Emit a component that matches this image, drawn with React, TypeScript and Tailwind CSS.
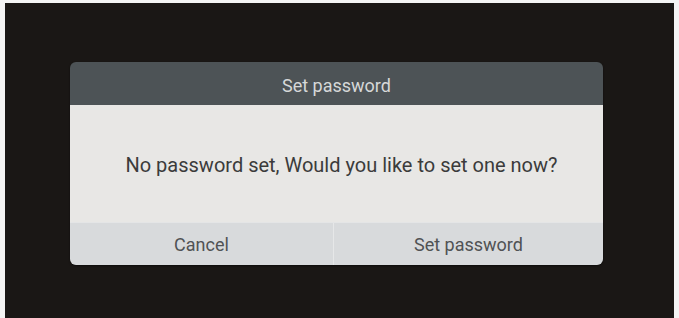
export default function App() {
  return (
    <div className="w-[679px] h-[318px] flex bg-[#f4f4f4] pl-[5px] pt-[3px] pr-[5px] font-['Roboto',sans-serif]">
      <div className="flex-1 bg-[#1a1715] pt-[59px] pl-[65px]">
        <div className="w-[533px] rounded-[6px] overflow-hidden flex flex-col shadow-[0_1px_2px_rgba(0,0,0,0.5)]">
          <div className="h-[43px] bg-[#4d5356] flex items-center justify-center pt-[4px] text-[18px] text-[#d6d8d8]">
            Set password
          </div>
          <div className="h-[117px] bg-[#e8e7e5] flex items-center justify-center pl-[10px] pt-[3px] text-[20px] text-[#3b3b3b]">
            No password set, Would you like to set one now?
          </div>
          <div className="h-[43px] bg-[#d8dadc] border-t border-[#e4e5e6] flex text-[18px] text-[#505254]">
            <button className="w-[264px] flex items-center justify-center border-r border-[#e6e7e8]">
              Cancel
            </button>
            <button className="flex-1 flex items-center justify-center">
              Set password
            </button>
          </div>
        </div>
      </div>
    </div>
  );
}
